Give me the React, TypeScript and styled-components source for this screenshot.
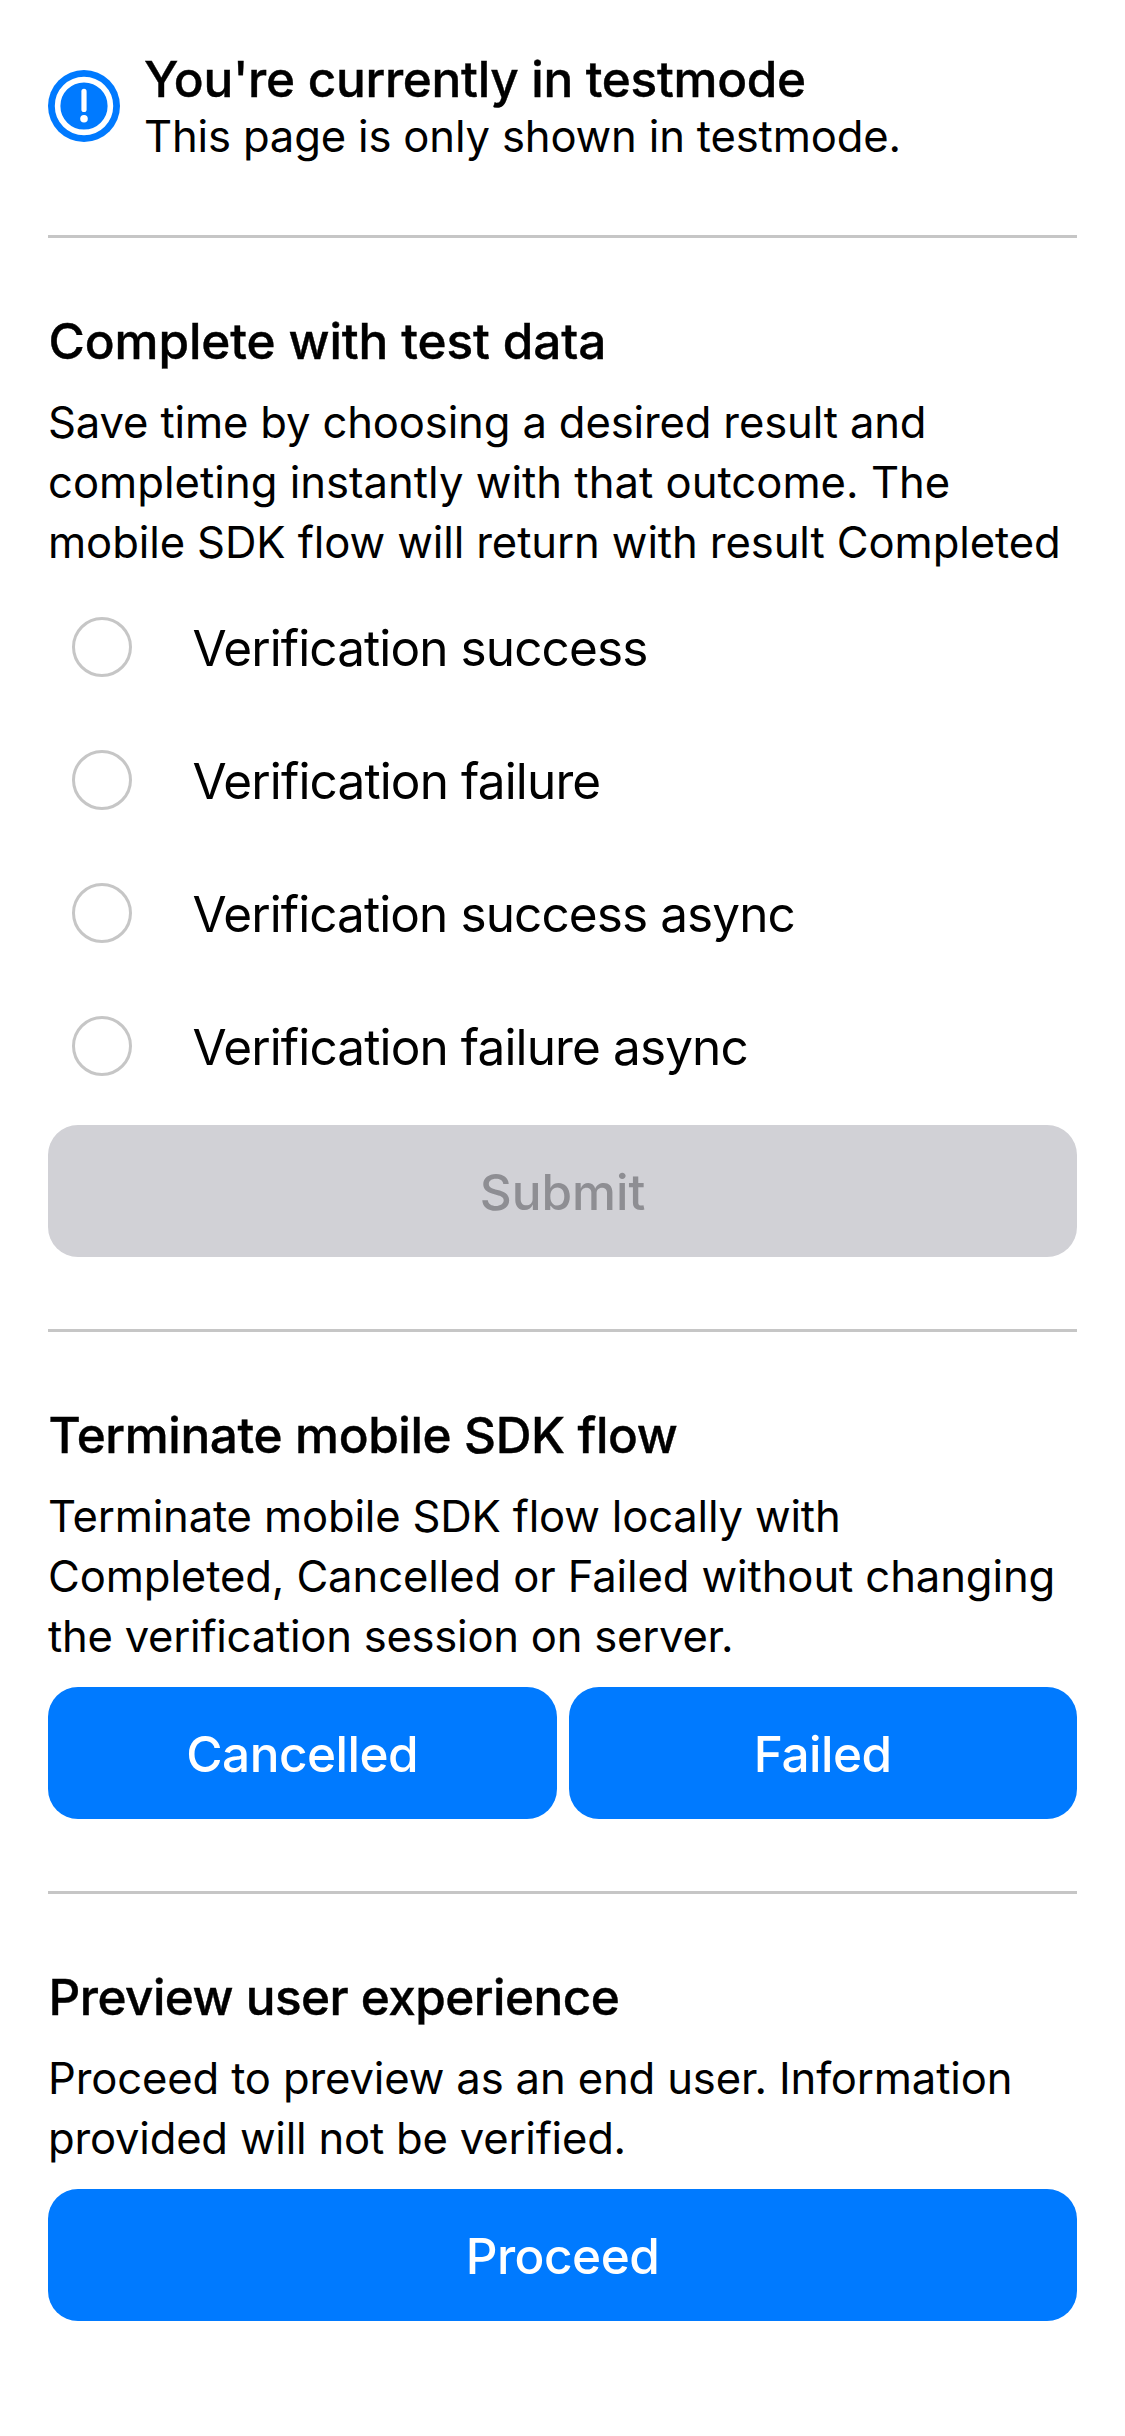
import React, { useState } from "react";
import styled, { createGlobalStyle } from "styled-components";

const GlobalStyle = createGlobalStyle`
  * { box-sizing: border-box; }
  body {
    margin: 0;
    background: #fff;
    color: #000;
    font-family: Inter, "Liberation Sans", sans-serif;
  }
`;

const Page = styled.main`
  display: flex;
  flex-direction: column;
  width: 1125px;
  min-height: 2436px;
  padding: 49px 48px 0;
  background: #fff;
`;

const Banner = styled.header`
  display: flex;
  align-items: flex-start;
  gap: 24px;
  height: 186px;
`;

const BannerIcon = styled.svg`
  flex: none;
  width: 72px;
  height: 72px;
  margin-top: 21px;
`;

const BannerText = styled.div`
  display: flex;
  flex-direction: column;
`;

const Line = styled.span<{ $track?: number }>`
  display: block;
  white-space: nowrap;
  letter-spacing: ${(p) => p.$track ?? 0}px;
`;

const BannerTitle = styled.h1`
  margin: 0;
  font-size: 49.5px;
  font-weight: 500;
  line-height: 60px;
  -webkit-text-stroke: 0.4px currentColor;
`;

const BannerNote = styled.p`
  margin: 0;
  font-size: 43.6px;
  line-height: 55px;
`;

const Section = styled.section`
  display: flex;
  flex-direction: column;
  padding: 73px 0 72px;
  border-top: 3px solid #c6c6c6;
`;

const Heading = styled.h2`
  margin: 0 0 22px;
  padding-left: 0.6px;
  font-size: 49.5px;
  font-weight: 500;
  line-height: 60px;
  -webkit-text-stroke: 0.4px currentColor;
`;

const Copy = styled.p`
  margin: 0 0 20px;
  font-size: 43.6px;
  line-height: 60px;
`;

const Options = styled.div`
  display: flex;
  flex-direction: column;
  margin: -12px 0 12px;
`;

const Option = styled.label`
  display: flex;
  align-items: center;
  gap: 60.5px;
  height: 133px;
  padding-left: 24px;
  font-size: 49.5px;
  line-height: 60px;
  cursor: pointer;

  ${Line} {
    padding-top: 1px;
  }
`;

const Radio = styled.input`
  appearance: none;
  flex: none;
  width: 60px;
  height: 60px;
  margin: 0 0 1px;
  border: 3px solid #c6c6c6;
  border-radius: 50%;

  &:checked {
    border: 18px solid #007aff;
  }
`;

const ButtonRow = styled.div`
  display: flex;
  gap: 12px;
`;

const Button = styled.button`
  flex: 1;
  height: 132px;
  padding: 2px 0 0;
  border: 0;
  border-radius: 30px;
  background: #007aff;
  color: #fff;
  font: 500 49.5px/60px Inter, "Liberation Sans", sans-serif;

  &:disabled {
    background: #d1d1d6;
    color: #8e8e93;
  }
`;

type TextLine = [text: string, track: number];

const Lines = ({ lines }: { lines: TextLine[] }) => (
  <>
    {lines.map(([text, track]) => (
      <Line key={text} $track={track}>{text}</Line>
    ))}
  </>
);

const options: TextLine[] = [
  ["Verification success", -0.9],
  ["Verification failure", -0.86],
  ["Verification success async", -0.91],
  ["Verification failure async", -0.88],
];

export default function App() {
  const [choice, setChoice] = useState<string | null>(null);
  return (
    <>
      <GlobalStyle />
      <Page>
        <Banner>
          <BannerIcon viewBox="0 0 72 72" aria-hidden="true">
            <circle cx="36" cy="36" r="36" fill="#007aff" />
            <circle cx="36" cy="36" r="26.4" fill="none" stroke="#fff" strokeWidth="5.6" />
            <path d="M36 21.4V39.4" stroke="#fff" strokeWidth="5.2" strokeLinecap="round" />
            <circle cx="36" cy="48.8" r="3.8" fill="#fff" />
          </BannerIcon>
          <BannerText>
            <BannerTitle><Lines lines={[["You're currently in testmode", -0.3]]} /></BannerTitle>
            <BannerNote><Lines lines={[["This page is only shown in testmode.", -0.17]]} /></BannerNote>
          </BannerText>
        </Banner>

        <Section>
          <Heading><Lines lines={[["Complete with test data", -0.12]]} /></Heading>
          <Copy>
            <Lines
              lines={[
                ["Save time by choosing a desired result and", -0.15],
                ["completing instantly with that outcome. The", 0.02],
                ["mobile SDK flow will return with result Completed", -0.1],
              ]}
            />
          </Copy>
          <Options role="radiogroup">
            {options.map(([text, track]) => (
              <Option key={text}>
                <Radio type="radio" name="result" checked={choice === text} onChange={() => setChoice(text)} />
                <Line $track={track}>{text}</Line>
              </Option>
            ))}
          </Options>
          <ButtonRow>
            <Button disabled={choice === null}><Line $track={0}>Submit</Line></Button>
          </ButtonRow>
        </Section>

        <Section>
          <Heading><Lines lines={[["Terminate mobile SDK flow", -0.38]]} /></Heading>
          <Copy>
            <Lines
              lines={[
                ["Terminate mobile SDK flow locally with", -0.18],
                ["Completed, Cancelled or Failed without changing", -0.11],
                ["the verification session on server.", -0.25],
              ]}
            />
          </Copy>
          <ButtonRow>
            <Button><Line $track={-0.5}>Cancelled</Line></Button>
            <Button><Line $track={-0.5}>Failed</Line></Button>
          </ButtonRow>
        </Section>

        <Section>
          <Heading><Lines lines={[["Preview user experience", -0.55]]} /></Heading>
          <Copy>
            <Lines
              lines={[
                ["Proceed to preview as an end user. Information", -0.15],
                ["provided will not be verified.", -0.21],
              ]}
            />
          </Copy>
          <ButtonRow>
            <Button><Line $track={-0.5}>Proceed</Line></Button>
          </ButtonRow>
        </Section>
      </Page>
    </>
  );
}
